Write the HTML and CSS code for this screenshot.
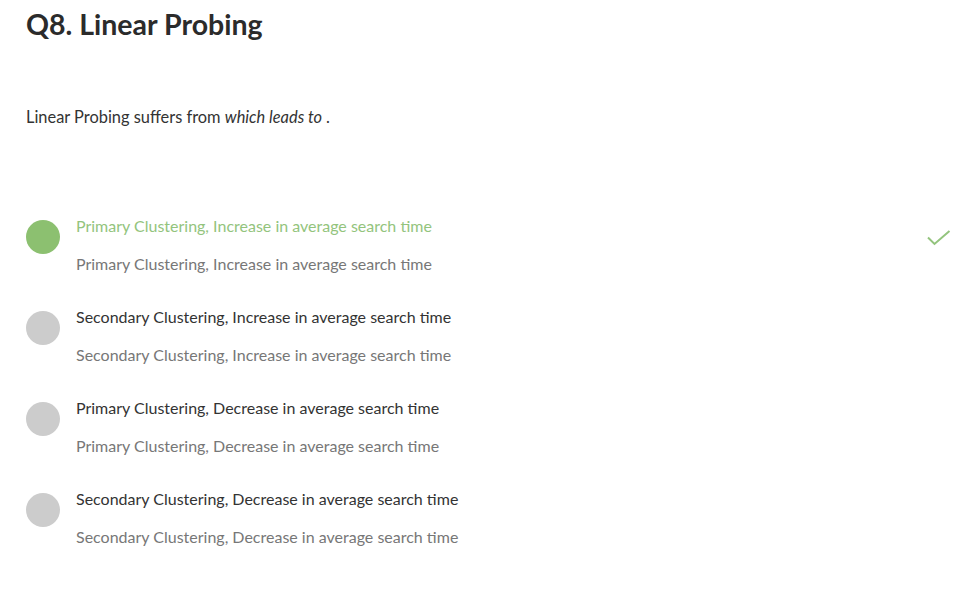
FILE: index.html
```html
<!DOCTYPE html>
<html>
<head>
<meta charset="utf-8">
<link rel="stylesheet" href="styles.css">
</head>
<body>
<div class="page">
  <h1 class="title">Q8. Linear Probing</h1>
  <p class="question">Linear Probing suffers from <em>which leads to </em>.</p>
  <div class="options">
    <div class="option correct">
      <span class="dot"></span>
      <div class="texts">
        <div class="main">Primary Clustering, Increase in average search time</div>
        <div class="sub">Primary Clustering, Increase in average search time</div>
      </div>
      <svg class="check" width="26" height="18" viewBox="0 0 26 18"><path d="M2 8.5 L8.5 15 L23.5 2" fill="none" stroke="#93c47d" stroke-width="2"/></svg>
    </div>
    <div class="option">
      <span class="dot"></span>
      <div class="texts">
        <div class="main">Secondary Clustering, Increase in average search time</div>
        <div class="sub">Secondary Clustering, Increase in average search time</div>
      </div>
    </div>
    <div class="option">
      <span class="dot"></span>
      <div class="texts">
        <div class="main">Primary Clustering, Decrease in average search time</div>
        <div class="sub">Primary Clustering, Decrease in average search time</div>
      </div>
    </div>
    <div class="option">
      <span class="dot"></span>
      <div class="texts">
        <div class="main">Secondary Clustering, Decrease in average search time</div>
        <div class="sub">Secondary Clustering, Decrease in average search time</div>
      </div>
    </div>
  </div>
</div>
</body>
</html>
```

FILE: styles.css
```css
html, body { margin: 0; padding: 0; background: #fff; }
body { font-family: "Lato", "Open Sans", sans-serif; color: #333; }
.page { padding: 6px 26px 0 26px; }
.title { margin: 0; font-size: 28.5px; font-weight: 700; color: #2b2b2b; line-height: 36px; }
.question { margin: 63px 0 0 0; font-size: 16.4px; line-height: 24px; color: #333; }
.question em { font-style: italic; }
.options { margin-top: 87px; display: flex; flex-direction: column; gap: 33px; }
.option { display: flex; align-items: flex-start; position: relative; }
.dot { width: 34px; height: 34px; border-radius: 50%; background: #cccccc; flex: none; margin-top: 4px; }
.option.correct .dot { background: #8cc070; }
.texts { margin-left: 16px; flex: 1; }
.main { font-size: 16px; line-height: 20px; color: #333; }
.sub { font-size: 16px; line-height: 20px; color: #777; margin-top: 18px; }
.option.correct .main { color: #93c47d; }
.check { position: absolute; right: 2px; top: 13px; }
```
